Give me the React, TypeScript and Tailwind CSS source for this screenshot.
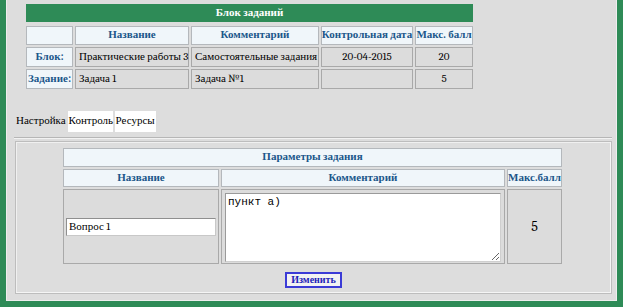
import React from 'react';

const headCell =
  'border border-[#b4b8bc] bg-[#f0f6fa] flex items-center justify-center font-bold text-[#1b578a] text-[11px] whitespace-nowrap';
const dataCell =
  'border border-[#a9a9a9] bg-[#dcdcdc] flex items-center text-[11px] text-black whitespace-nowrap';

export default function App() {
  return (
    <div className="w-[623px] h-[307px] bg-[#2e8b57] pl-[6px] pr-[6px] pb-[6px] font-serif">
      <div className="h-full bg-[#dddddd] border-x border-b border-[#eeeeee] flex flex-col">
        {/* Блок заданий */}
        <div className="ml-[19px] mt-[4px] w-[447px]">
          <div className="h-[18px] bg-[#2e8b57] text-white font-bold text-[11px] flex items-center justify-center">
            Блок заданий
          </div>
          <div className="mt-[4px] grid grid-cols-[47px_114px_128px_92px_58px] grid-rows-[19px_20px_20px] gap-[2px]">
            <div className={headCell}></div>
            <div className={headCell}>Название</div>
            <div className={headCell}>Комментарий</div>
            <div className={headCell}>Контрольная дата</div>
            <div className={headCell}>Макс. балл</div>

            <div className={headCell}>Блок:</div>
            <div className={`${dataCell} pl-[3px]`}>Практические работы 3</div>
            <div className={`${dataCell} pl-[3px]`}>Самостоятельные задания</div>
            <div className={`${dataCell} justify-center`}>20-04-2015</div>
            <div className={`${dataCell} justify-center`}>20</div>

            <div className={headCell}>Задание:</div>
            <div className={`${dataCell} pl-[3px]`}>Задача 1</div>
            <div className={`${dataCell} pl-[3px]`}>Задача №1</div>
            <div className={dataCell}></div>
            <div className={`${dataCell} justify-center`}>5</div>
          </div>
        </div>

        {/* вкладки */}
        <div className="mt-[22px] ml-[9px] flex items-start text-[11px] text-black">
          <span className="pt-[2px] mr-[2px]">Настройка</span>
          <span className="bg-white h-[21px] px-[1px] flex items-center w-[45px]">Контроль</span>
          <span className="bg-white h-[21px] px-[1px] flex items-center w-[41px] ml-[2px]">Ресурсы</span>
        </div>

        <div className="mt-[5px] ml-[7px] w-[598px] h-[2px] border-t border-[#b6b6b6] border-b border-b-[#f2f2f2]"></div>

        {/* Параметры задания */}
        <div className="mt-[2px] ml-[8px] w-[597px] h-[153px] border border-[#bdbdbd] shadow-[inset_-1px_-1px_0_#f5f5f5,inset_1px_1px_0_#f0f0f0] flex flex-col items-center pt-[6px]">
          <div className="w-[499px] grid grid-cols-[156px_284px_55px] grid-rows-[19px_18px_75px] gap-[2px] mr-[2px]">
            <div className={`${headCell} col-span-3`}>Параметры задания</div>
            <div className={headCell}>Название</div>
            <div className={headCell}>Комментарий</div>
            <div className={headCell}>Макс.балл</div>

            <div className={`${dataCell} px-[2px]`}>
              <input
                defaultValue="Вопрос 1"
                className="w-[150px] h-[18px] bg-white border border-[#8f8f8f] border-b-[#c8c8c8] border-r-[#c8c8c8] text-[11px] px-[2px] outline-none font-serif"
              />
            </div>
            <div className={`${dataCell} items-start px-[3px] pt-[3px]`}>
              <textarea
                defaultValue="пункт а)"
                className="w-[277px] h-[69px] bg-white border border-[#9a9a9a] border-b-[#cfcfcf] border-r-[#cfcfcf] font-mono text-[11px] leading-[13px] px-[2px] py-[2px] outline-none"
              />
            </div>
            <div className={`${dataCell} justify-center text-[14px]`}>5</div>
          </div>
          <button className="mt-[8px] w-[57px] h-[16px] border-2 border-[#3b3bd6] bg-[#f2f2f2] text-[#2222b8] font-bold text-[10px] leading-none flex items-center justify-center">
            Изменить
          </button>
        </div>
      </div>
    </div>
  );
}
